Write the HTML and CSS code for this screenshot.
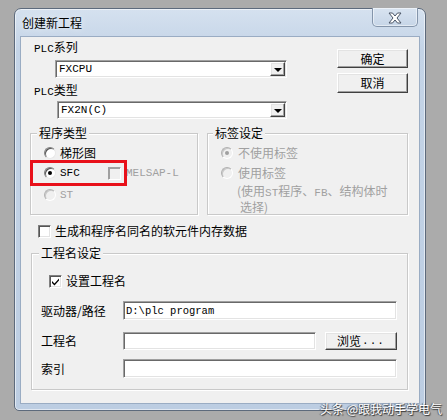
FILE: index.html
```html
<!DOCTYPE html>
<html lang="zh">
<head>
<meta charset="utf-8">
<link rel="stylesheet" href="styles.css">
</head>
<body>
<div class="win">
  <div class="titlebar">
    <span class="title">创建新工程</span>
    <div class="closebtn">
      <svg width="16" height="12" viewBox="0 0 16 12"><path d="M2 1 H5.5 L8 4 L10.5 1 H14 L10 6 L14 11 H10.5 L8 8 L5.5 11 H2 L6 6 Z" fill="#fff" stroke="#4a5566" stroke-width="1"/></svg>
    </div>
  </div>
  <div class="client">
    <div class="top">
      <div class="leftcol">
        <div class="lbl lbl1"><span class="lat">PLC</span>系列</div>
        <div class="combo combo1"><span class="cval">FXCPU</span><span class="ddbtn"><i class="arrow"></i></span></div>
        <div class="lbl lbl2"><span class="lat">PLC</span>类型</div>
        <div class="combo combo2"><span class="cval">FX2N(C)</span><span class="ddbtn"><i class="arrow"></i></span></div>
      </div>
      <div class="rightcol">
        <div class="btn okbtn">确定</div>
        <div class="btn">取消</div>
      </div>
    </div>

    <div class="groups">
      <div class="group g1">
        <span class="legend">程序类型</span>
        <div class="row r1"><span class="radio"></span><span class="rtext">梯形图</span></div>
        <div class="row r2"><span class="radio on"></span><span class="rtext lat sfc">SFC</span><span class="check dis"></span><span class="rtext lat dtext melsap">MELSAP-L</span></div>
        <div class="row r3"><span class="radio dis"></span><span class="rtext lat dtext">ST</span></div>
        <div class="redbox"></div>
      </div>
      <div class="group g2">
        <span class="legend">标签设定</span>
        <div class="row r1"><span class="radio dis on"></span><span class="rtext dtext gap5">不使用标签</span></div>
        <div class="row r2"><span class="radio dis"></span><span class="rtext dtext gap5">使用标签</span></div>
        <div class="note dtext">
          <div class="nl1">(使用<span class="lat">ST</span>程序、<span class="lat">FB</span>、结构体时</div>
          <div class="nl2">选择)</div>
        </div>
      </div>
    </div>

    <div class="checkrow"><span class="check"></span><span class="ctext">生成和程序名同名的软元件内存数据</span></div>

    <div class="group g3">
      <span class="legend">工程名设定</span>
      <div class="checkrow cr2"><span class="check"><svg width="9" height="9" viewBox="0 0 9 9"><path d="M1 4 L3.5 6.5 L8 1.5 L8 3.5 L3.5 8.5 L1 6 Z" fill="#000"/></svg></span><span class="ctext">设置工程名</span></div>
      <div class="frow fr1"><span class="flabel">驱动器/路径</span><div class="input w274"><span class="ival">D:\plc program</span></div></div>
      <div class="frow fr2"><span class="flabel">工程名</span><div class="input w193"></div><div class="btn browse">浏览<span class="lat">...</span></div></div>
      <div class="frow fr3"><span class="flabel">索引</span><div class="input w274"></div></div>
    </div>
  </div>
</div>
<div class="watermark">头条 @跟我动手学电气</div>
</body>
</html>
```

FILE: styles.css
```css
html, body {
  margin: 0;
  padding: 0;
}
body {
  background: #ababab;
  width: 447px;
  height: 420px;
  overflow: hidden;
  font-family: "Noto Sans CJK SC", "Noto Sans", sans-serif;
  font-size: 12px;
  color: #000;
  padding-top: 8px;
  padding-left: 14px;
  box-sizing: border-box;
  position: relative;
}
.lat {
  font-family: "Liberation Mono", "DejaVu Sans Mono", monospace;
  font-size: 11px;
}
.win {
  position: relative;
  width: 412px;
  height: 403px;
  box-sizing: border-box;
  border: 1px solid #5d6a7c;
  border-radius: 7px 7px 5px 5px;
  background: linear-gradient(180deg, #d5e1ef 0%, #c4d4e7 10%, #bccde2 100%);
  box-shadow: inset 0 0 0 1px rgba(255,255,255,0.55);
}
.titlebar {
  height: 28px;
  position: relative;
  display: flex;
  align-items: center;
}
.title {
  margin-left: 7px;
  line-height: 14px;
  color: #000;
  text-shadow: 0 0 6px rgba(255,255,255,0.9);
}
.closebtn {
  position: absolute;
  left: 357px;
  top: -1px;
  width: 46px;
  height: 19px;
  box-sizing: border-box;
  border: 1px solid #8495ab;
  border-top: none;
  border-radius: 0 0 5px 5px;
  background: linear-gradient(180deg, #d9e4f1, #c6d5e7);
  box-shadow: inset 0 0 0 1px rgba(255,255,255,0.5);
  display: flex;
  align-items: center;
  justify-content: center;
}
.closebtn svg { margin-top: 1px; }
.client {
  margin-left: 6px;
  width: 398px;
  height: 366px;
  background: #f0f0f0;
  box-shadow: 0 0 0 1px #9aacc3;
  position: relative;
}
.top {
  display: flex;
  height: 96px;
}
.leftcol {
  width: 266px;
}
.lbl {
  height: 16px;
  line-height: 16px;
  margin-left: 13px;
}
.lbl1 { padding-top: 2px; }
.lbl2 { margin-top: 4px; }
.combo {
  position: relative;
  height: 18px;
  box-sizing: border-box;
  background: #fff;
  border: 1px solid;
  border-color: #a0a0a0 #fff #fff #a0a0a0;
  box-shadow: inset 1px 1px 0 #696969, inset -1px -1px 0 #e3e3e3;
  display: flex;
  align-items: center;
}
.combo1 { margin-left: 34px; width: 232px; margin-top: 5px; }
.combo2 { margin-left: 36px; width: 230px; margin-top: 3px; }
.cval {
  margin-left: 3px;
  font-family: "Liberation Mono", "DejaVu Sans Mono", monospace;
  font-size: 11px;
  line-height: 14px;
}
.ddbtn {
  position: absolute;
  right: 1px;
  top: 1px;
  width: 15px;
  height: 14px;
  box-sizing: border-box;
  background: #f0f0f0;
  border: 1px solid;
  border-color: #fff #404040 #404040 #fff;
  box-shadow: inset -1px -1px 0 #a0a0a0, inset 1px 1px 0 #e3e3e3;
  display: flex;
  align-items: center;
  justify-content: center;
}
.arrow {
  width: 0;
  height: 0;
  border-left: 4px solid transparent;
  border-right: 4px solid transparent;
  border-top: 4px solid #000;
  margin-top: 1px;
}
.rightcol {
  margin-left: 50px;
  padding-top: 12px;
  display: flex;
  flex-direction: column;
  gap: 5px;
}
.btn {
  width: 71px;
  height: 19px;
  box-sizing: border-box;
  background: #f0f0f0;
  border: 1px solid;
  border-color: #fff #404040 #404040 #fff;
  box-shadow: inset -1px -1px 0 #a0a0a0, inset 1px 1px 0 #e3e3e3;
  display: flex;
  align-items: center;
  justify-content: center;
  line-height: 14px;
}
.rightcol .btn + .btn { height: 20px; }

.groups {
  display: flex;
  margin-left: 9px;
  gap: 9px;
}
.group {
  position: relative;
  box-sizing: border-box;
  border: 1px solid #c9c9c9;
  box-shadow: 1px 1px 0 #fff, inset 1px 1px 0 #fff;
}
.g1 { width: 168px; height: 82px; padding-top: 9px; }
.g2 { width: 201px; height: 82px; padding-top: 9px; }
.legend {
  position: absolute;
  top: -8px;
  left: 6px;
  padding: 0 2px;
  background: #f0f0f0;
  line-height: 14px;
}
.g2 .legend { left: 5px; }
.g3 .legend { left: 7px; }
.row {
  height: 20px;
  display: flex;
  align-items: center;
}
.row.r3 { margin-top: 2px; }
.radio {
  width: 12px;
  height: 12px;
  box-sizing: border-box;
  margin-left: 13px;
  border-radius: 50%;
  border: 1px solid;
  border-color: #808080 #e8e8e8 #e8e8e8 #808080;
  background: #fff;
  box-shadow: inset 1px 1px 0 #555;
  position: relative;
  flex: none;
}
.radio.dis {
  background: #f0f0f0;
  border-color: #b0b0b0 #fff #fff #b0b0b0;
  box-shadow: inset 1px 1px 0 #c8c8c8;
}
.radio.on::after {
  content: "";
  position: absolute;
  left: 3px;
  top: 3px;
  width: 4px;
  height: 4px;
  border-radius: 50%;
  background: #000;
}
.radio.dis.on::after { background: #a0a0a0; }
.rtext {
  margin-left: 4px;
  line-height: 14px;
}
.rtext.gap5 { margin-left: 5px; }
.rtext.lat { font-size: 11px; }
.sfc { width: 48px; }
.dtext { color: #a0a0a0; }
.melsap { margin-left: 5px; }
.check {
  width: 13px;
  height: 13px;
  box-sizing: border-box;
  background: #fff;
  border: 1px solid;
  border-color: #808080 #fff #fff #808080;
  box-shadow: inset 1px 1px 0 #555, inset -1px -1px 0 #e3e3e3;
  flex: none;
  display: flex;
  align-items: center;
  justify-content: center;
}
.check.dis {
  background: #f0f0f0;
  border-color: #a0a0a0 #fff #fff #a0a0a0;
  box-shadow: inset 1px 1px 0 #a0a0a0;
}
.redbox {
  position: absolute;
  left: -1px;
  top: 26px;
  width: 97px;
  height: 26px;
  box-sizing: border-box;
  border: 3px solid #e8101a;
}
.note {
  margin-top: 1px;
  padding-left: 29px;
  line-height: 13px;
}
.note .lat { font-size: 11px; }
.nl2 { padding-left: 3px; }

.checkrow {
  display: flex;
  align-items: center;
  height: 14px;
  margin-top: 9px;
}
.checkrow > .check { margin-left: 17px; }
.ctext { margin-left: 4px; line-height: 14px; }

.g3 {
  margin-top: 15px;
  margin-left: 10px;
  width: 377px;
  height: 137px;
}
.checkrow.cr2 { margin-top: 20px; }
.frow {
  display: flex;
  align-items: center;
}
.fr1 { margin-top: 13px; height: 19px; }
.fr2 { margin-top: 12px; height: 18px; }
.fr3 { margin-top: 9px; height: 19px; }
.flabel {
  width: 82px;
  margin-left: 9px;
  line-height: 14px;
  flex: none;
}
.input {
  height: 100%;
  box-sizing: border-box;
  background: #fff;
  border: 1px solid;
  border-color: #a0a0a0 #fff #fff #a0a0a0;
  box-shadow: inset 1px 1px 0 #696969, inset -1px -1px 0 #e3e3e3;
  display: flex;
  align-items: center;
}
.w274 { width: 274px; }
.w193 { width: 193px; }
.ival {
  margin-left: 2px;
  font-family: "Liberation Mono", "DejaVu Sans Mono", monospace;
  font-size: 10.5px;
  line-height: 14px;
}
.browse {
  margin-left: 9px;
  width: 72px;
  height: 18px;
}
.browse .lat { letter-spacing: 1px; margin-left: 1px; }
.watermark {
  position: absolute;
  left: 320px;
  top: 402px;
  color: #fff;
  font-size: 12px;
  line-height: 14px;
  text-shadow: 1px 1px 1px #333, -1px 0 1px #555;
  white-space: nowrap;
}
```
